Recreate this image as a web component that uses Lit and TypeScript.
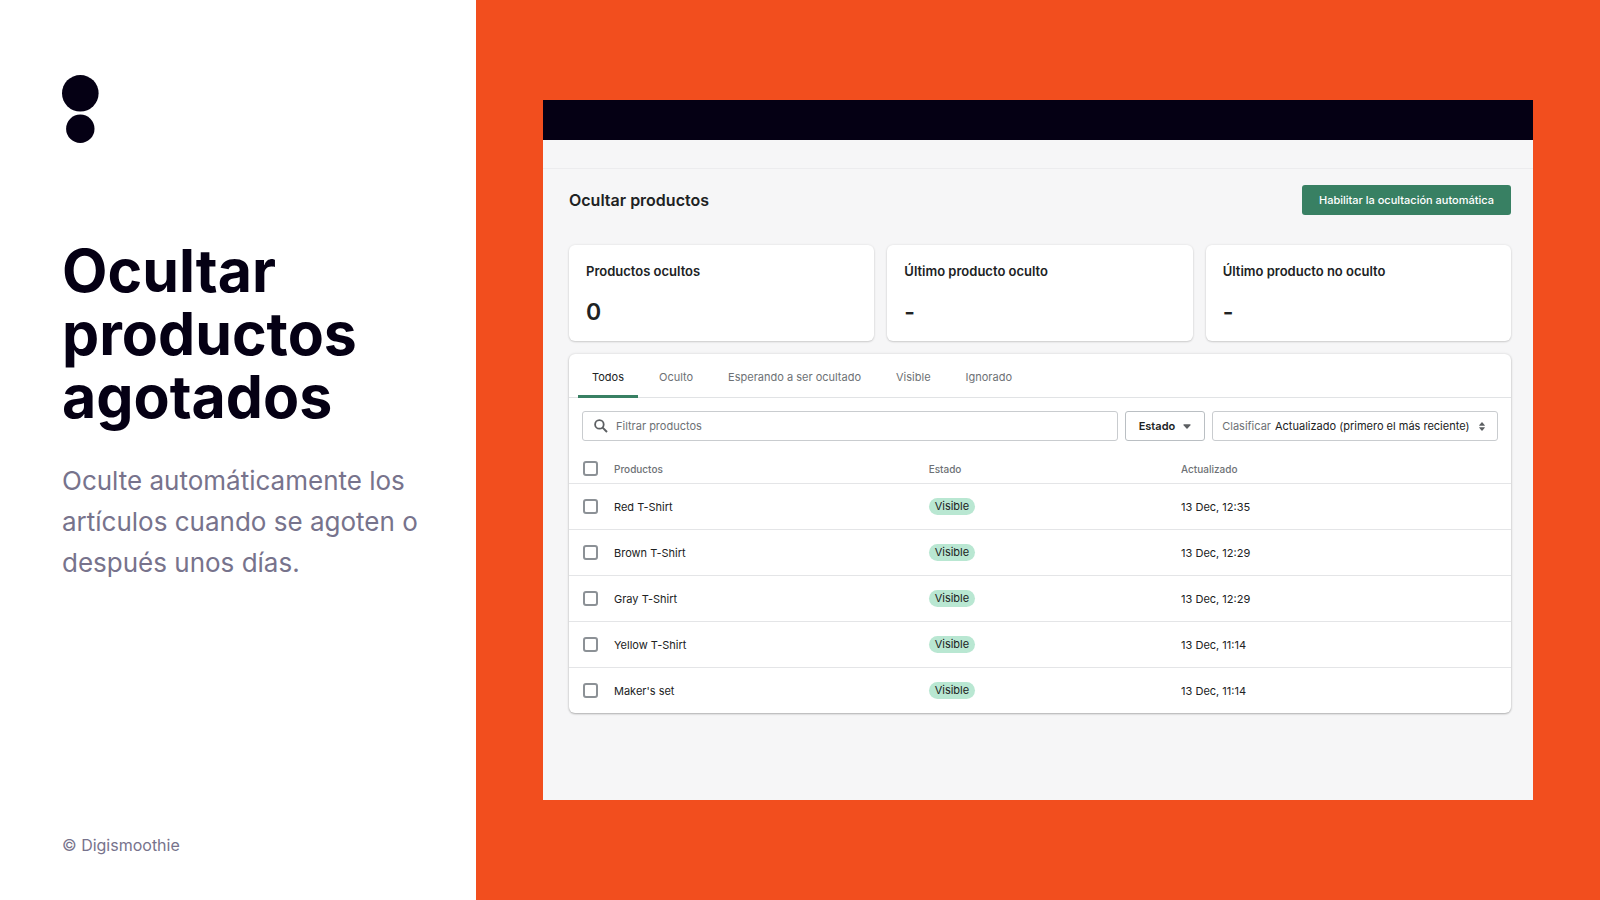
import { LitElement, html, css } from "lit";
import { customElement, property, state } from "lit/decorators.js";
import { classMap } from "lit/directives/class-map.js";

interface Product {
  name: string;
  status: string;
  updated: string;
}

const PRODUCTS: Product[] = [
  { name: "Red T-Shirt", status: "Visible", updated: "13 Dec, 12:35" },
  { name: "Brown T-Shirt", status: "Visible", updated: "13 Dec, 12:29" },
  { name: "Gray T-Shirt", status: "Visible", updated: "13 Dec, 12:29" },
  { name: "Yellow T-Shirt", status: "Visible", updated: "13 Dec, 11:14" },
  { name: "Maker's set", status: "Visible", updated: "13 Dec, 11:14" },
];

const TABS = ["Todos", "Oculto", "Esperando a ser ocultado", "Visible", "Ignorado"];

@customElement("promo-panel")
class PromoPanel extends LitElement {
  static styles = css`
    :host {
      display: flex;
      flex-direction: column;
      box-sizing: border-box;
      padding: 75px 40px 45px 62px;
      background: #fff;
    }
    .logo {
      display: block;
      width: 37px;
      height: 68px;
    }
    .title {
      margin: 96px 0 0;
      color: #050014;
      font-size: 59px;
      font-weight: 700;
      line-height: 63px;
    }
    .lead {
      margin: 32px 0 0;
      color: #77738c;
      font-size: 26px;
      line-height: 41px;
    }
    .copyright {
      margin: auto 0 0;
      color: #77738c;
      font-size: 16px;
      line-height: 20px;
    }
  `;

  render() {
    return html`
      <svg class="logo" viewBox="0 0 37 68" aria-hidden="true">
        <circle cx="18.3" cy="18.3" r="18.3" fill="#050014" />
        <circle cx="18.3" cy="53.8" r="14.2" fill="#050014" />
      </svg>
      <h1 class="title">Ocultar productos agotados</h1>
      <p class="lead">Oculte automáticamente los artículos cuando se agoten o después unos días.</p>
      <p class="copyright">© Digismoothie</p>
    `;
  }
}

@customElement("stat-card")
class StatCard extends LitElement {
  @property() label = "";
  @property() value = "";

  static styles = css`
    :host {
      display: block;
      padding: 16px 17px;
      border-radius: 6px;
      background: #fff;
      box-shadow: 0 0 3px rgba(23, 24, 24, 0.08), 0 1px 2px rgba(0, 0, 0, 0.15);
    }
    .label {
      margin: 0;
      font-size: 13px;
      font-weight: 600;
      line-height: 20px;
    }
    .value {
      margin: 18px 0 0;
      font-size: 23px;
      font-weight: 600;
      line-height: 26px;
    }
  `;

  render() {
    return html`
      <h3 class="label">${this.label}</h3>
      <p class="value">${this.value}</p>
    `;
  }
}

@customElement("product-list")
class ProductList extends LitElement {
  @state() private activeTab = 0;

  static styles = css`
    :host {
      display: block;
      border-radius: 6px;
      background: #fff;
      box-shadow: 0 0 3px rgba(23, 24, 24, 0.12), 0 1px 2px rgba(0, 0, 0, 0.25);
    }
    button,
    input,
    select {
      margin: 0;
      color: inherit;
      font: inherit;
    }
    .tabs {
      display: flex;
      gap: 7px;
      padding: 0 9px;
      border-bottom: 1px solid #e1e3e5;
    }
    .tab {
      height: 44px;
      margin-bottom: -1px;
      padding: 5px 14px 0;
      border: 0;
      border-bottom: 3px solid transparent;
      border-radius: 2px 2px 0 0;
      background: none;
      color: #6d7175;
      font-size: 11px;
      white-space: nowrap;
    }
    .tab.active {
      border-bottom-color: #388063;
      color: #202223;
    }
    .filters {
      display: flex;
      gap: 7px;
      padding: 13px 13px 0;
      font-size: 11px;
    }
    .search,
    .filter,
    .sort {
      display: flex;
      align-items: center;
      box-sizing: border-box;
      height: 30px;
      border: 1px solid #c9cccf;
      border-radius: 3px;
      background: #fff;
    }
    .search {
      flex: 1;
      min-width: 0;
      padding: 0 11px;
      gap: 8px;
    }
    .search-icon {
      flex: none;
      width: 14px;
      height: 14px;
    }
    .search-input {
      flex: 1;
      min-width: 0;
      padding: 0;
      border: 0;
      outline: 0;
      background: none;
    }
    .search-input::placeholder {
      color: #6d7175;
      opacity: 1;
    }
    .filter {
      gap: 8px;
      padding: 0 13px;
      border-color: #babfc3;
      font-weight: 600;
    }
    .caret {
      width: 8px;
      height: 5px;
    }
    .sort {
      padding: 0 12px 0 9px;
      gap: 4px;
    }
    .sort-label {
      color: #6d7175;
    }
    .sort-select {
      appearance: none;
      padding: 0;
      border: 0;
      outline: 0;
      background: none;
    }
    .sort-icon {
      width: 6px;
      height: 9px;
      margin-left: 5px;
    }
    .table {
      width: 100%;
      margin-top: 13px;
      border-collapse: collapse;
      table-layout: fixed;
      font-size: 11px;
    }
    .col-check {
      width: 45px;
    }
    .col-name {
      width: 33.4%;
    }
    .col-status {
      width: 26.8%;
    }
    .head {
      height: 29px;
      padding: 0;
      color: #6d7175;
      font-size: 10px;
      font-weight: 500;
      text-align: left;
    }
    .cell {
      height: 45px;
      padding: 0;
      border-top: 1px solid #e4e5e7;
      line-height: 16px;
    }
    .check-cell {
      padding-left: 14px;
    }
    .check {
      display: block;
      appearance: none;
      box-sizing: border-box;
      width: 15px;
      height: 15px;
      border: 2px solid #8c9196;
      border-radius: 3px;
      background: #fff;
    }
    .check:checked {
      border-color: #388063;
      background: #388063;
    }
    .badge {
      display: inline-block;
      padding: 0 6px;
      border-radius: 9px;
      background: #b9e7d2;
      line-height: 17px;
    }
  `;

  render() {
    return html`
      <div class="tabs" role="tablist">
        ${TABS.map(
          (tab, i) => html`
            <button
              type="button"
              role="tab"
              aria-selected=${i === this.activeTab ? "true" : "false"}
              class=${classMap({ tab: true, active: i === this.activeTab })}
              @click=${() => (this.activeTab = i)}
            >${tab}</button>
          `
        )}
      </div>
      <div class="filters">
        <label class="search">
          <svg class="search-icon" viewBox="0 0 14 14" fill="none" stroke="#5c5f62" aria-hidden="true">
            <circle cx="5.4" cy="5.4" r="4.3" stroke-width="1.8" />
            <path d="M8.6 8.6 13 13" stroke-width="2" />
          </svg>
          <input class="search-input" type="text" placeholder="Filtrar productos" aria-label="Filtrar productos" />
        </label>
        <button class="filter" type="button">
          Estado
          <svg class="caret" viewBox="0 0 8 5" aria-hidden="true">
            <path d="M1 .3h6c.6 0 .9.6.5 1L4.5 4.500a.7.7 0 0 1-1 0L.5 1.300C.1.9.4.3 1 .3Z" fill="#5c5f62" />
          </svg>
        </button>
        <div class="sort">
          <label class="sort-label" for="sort">Clasificar</label>
          <select class="sort-select" id="sort">
            <option>Actualizado (primero el más reciente)</option>
          </select>
          <svg class="sort-icon" viewBox="0 0 6 9" fill="#5c5f62" aria-hidden="true">
            <path d="M3 0 5.800 3.200Q6 3.700 5.500 3.700H.5Q0 3.700.2 3.200Z" />
            <path d="M3 9 5.800 5.800Q6 5.300 5.500 5.300H.5Q0 5.300.2 5.800Z" />
          </svg>
        </div>
      </div>
      <table class="table">
        <colgroup>
          <col class="col-check" />
          <col class="col-name" />
          <col class="col-status" />
          <col />
        </colgroup>
        <thead>
          <tr>
            <th class="head check-cell"><input class="check" type="checkbox" aria-label="Seleccionar todos" /></th>
            <th class="head">Productos</th>
            <th class="head">Estado</th>
            <th class="head">Actualizado</th>
          </tr>
        </thead>
        <tbody>
          ${PRODUCTS.map(
            (p) => html`
              <tr>
                <td class="cell check-cell"><input class="check" type="checkbox" aria-label=${p.name} /></td>
                <td class="cell">${p.name}</td>
                <td class="cell"><span class="badge">${p.status}</span></td>
                <td class="cell">${p.updated}</td>
              </tr>
            `
          )}
        </tbody>
      </table>
    `;
  }
}

@customElement("app-root")
class AppRoot extends LitElement {
  static styles = css`
    :host {
      display: grid;
      grid-template-columns: minmax(0, 476fr) minmax(0, 1124fr);
      min-height: 100vh;
      font-family: Inter, "Liberation Sans", sans-serif;
    }
    .stage {
      display: flex;
      box-sizing: border-box;
      padding: 100px 67px;
      background: #f24e1e;
    }
    .window {
      flex: 1;
      min-width: 0;
      background: #f6f6f7;
      color: #202223;
    }
    .topbar {
      height: 40px;
      background: #050014;
    }
    .subbar {
      height: 28px;
      border-bottom: 1px solid #ececee;
    }
    .content {
      display: grid;
      gap: 13px;
      padding: 16px 22px 16px 26px;
    }
    .header {
      display: flex;
      align-items: center;
      justify-content: space-between;
      margin-bottom: 17px;
    }
    .heading {
      margin: 0;
      font-size: 16px;
      font-weight: 600;
      line-height: 24px;
    }
    .primary {
      height: 30px;
      padding: 0 17px;
      border: 0;
      border-radius: 3px;
      background: #388063;
      color: #fff;
      font: inherit;
      font-size: 11px;
      font-weight: 500;
    }
    .stats {
      display: grid;
      grid-template-columns: repeat(3, minmax(0, 1fr));
      gap: 13px;
    }
  `;

  render() {
    return html`
      <promo-panel></promo-panel>
      <main class="stage">
        <section class="window">
          <div class="topbar"></div>
          <div class="subbar"></div>
          <div class="content">
            <header class="header">
              <h2 class="heading">Ocultar productos</h2>
              <button class="primary" type="button">Habilitar la ocultación automática</button>
            </header>
            <div class="stats">
              <stat-card label="Productos ocultos" value="0"></stat-card>
              <stat-card label="Último producto oculto" value="-"></stat-card>
              <stat-card label="Último producto no oculto" value="-"></stat-card>
            </div>
            <product-list></product-list>
          </div>
        </section>
      </main>
    `;
  }
}
